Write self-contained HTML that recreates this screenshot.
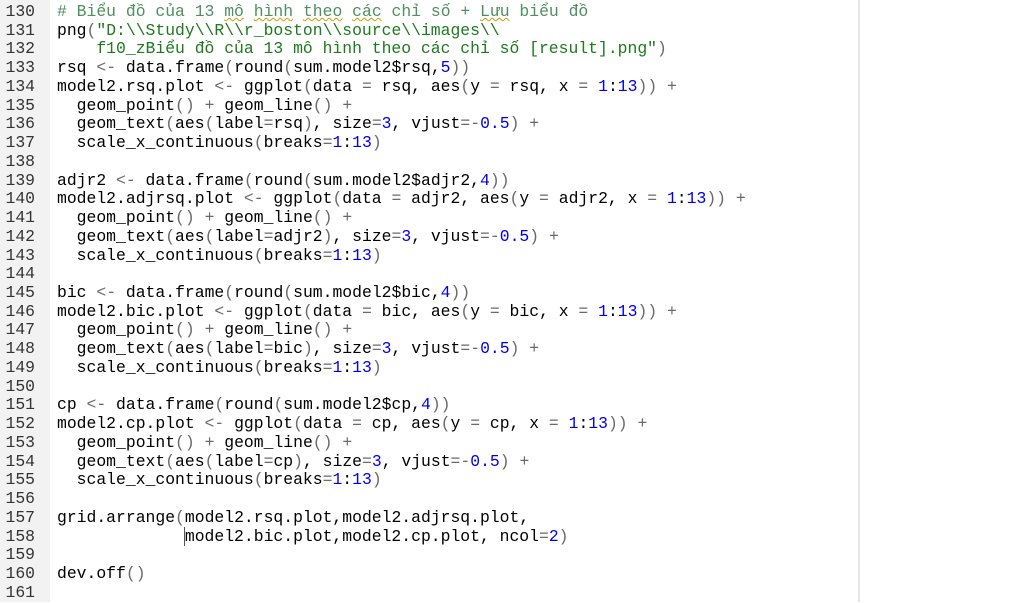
<!DOCTYPE html>
<html><head><meta charset="utf-8">
<style>
html,body{margin:0;padding:0;width:1015px;height:602px;overflow:hidden;background:#fff;}
.gut{position:absolute;left:0;top:0;width:50px;height:602px;background:#f2f2f2;}
.vline{position:absolute;left:858px;top:0;width:2px;height:602px;background:#e6e6e6;}
pre{margin:0;position:absolute;top:3px;font-family:"Liberation Mono","DejaVu Sans Mono",monospace;font-size:16.4px;line-height:18.73px;color:#000;}
.ln{left:0;width:35px;text-align:right;color:#333;}
.code{left:57px;}
.o{color:#6a6a6a}.n{color:#0000ee}.s{color:#1d7a1d}.c{color:#4f8f60}
.u{text-decoration:underline wavy #c8a000;text-decoration-thickness:1px;}
.cur{border-left:1px solid #555;margin-left:-1px}
</style></head><body>
<div class="gut"></div><div class="vline"></div>
<pre class="ln">130
131
132
133
134
135
136
137
138
139
140
141
142
143
144
145
146
147
148
149
150
151
152
153
154
155
156
157
158
159
160
161</pre>
<pre class="code"><span class="c"># Biểu đồ của 13 <span class="u">mô</span> <span class="u">hình</span> <span class="u">theo</span> <span class="u">các</span> chỉ số + <span class="u">Lưu</span> biểu đồ</span>
png<span class="o">(</span><span class="s">"D:\\Study\\R\\r_boston\\source\\images\\
    f10_zBiểu đồ của 13 mô hình theo các chỉ số [result].png"</span><span class="o">)</span>
rsq <span class="o">&lt;-</span> data.frame<span class="o">(</span>round<span class="o">(</span>sum.model2$rsq,<span class="n">5</span><span class="o">))</span>
model2.rsq.plot <span class="o">&lt;-</span> ggplot<span class="o">(</span>data <span class="o">=</span> rsq, aes<span class="o">(</span>y <span class="o">=</span> rsq, x <span class="o">=</span> <span class="n">1</span>:<span class="n">13</span><span class="o">))</span> <span class="o">+</span>
  geom_point<span class="o">()</span> <span class="o">+</span> geom_line<span class="o">()</span> <span class="o">+</span>
  geom_text<span class="o">(</span>aes<span class="o">(</span>label<span class="o">=</span>rsq<span class="o">)</span>, size<span class="o">=</span><span class="n">3</span>, vjust<span class="o">=-</span><span class="n">0.5</span><span class="o">)</span> <span class="o">+</span>
  scale_x_continuous<span class="o">(</span>breaks<span class="o">=</span><span class="n">1</span>:<span class="n">13</span><span class="o">)</span>

adjr2 <span class="o">&lt;-</span> data.frame<span class="o">(</span>round<span class="o">(</span>sum.model2$adjr2,<span class="n">4</span><span class="o">))</span>
model2.adjrsq.plot <span class="o">&lt;-</span> ggplot<span class="o">(</span>data <span class="o">=</span> adjr2, aes<span class="o">(</span>y <span class="o">=</span> adjr2, x <span class="o">=</span> <span class="n">1</span>:<span class="n">13</span><span class="o">))</span> <span class="o">+</span>
  geom_point<span class="o">()</span> <span class="o">+</span> geom_line<span class="o">()</span> <span class="o">+</span>
  geom_text<span class="o">(</span>aes<span class="o">(</span>label<span class="o">=</span>adjr2<span class="o">)</span>, size<span class="o">=</span><span class="n">3</span>, vjust<span class="o">=-</span><span class="n">0.5</span><span class="o">)</span> <span class="o">+</span>
  scale_x_continuous<span class="o">(</span>breaks<span class="o">=</span><span class="n">1</span>:<span class="n">13</span><span class="o">)</span>

bic <span class="o">&lt;-</span> data.frame<span class="o">(</span>round<span class="o">(</span>sum.model2$bic,<span class="n">4</span><span class="o">))</span>
model2.bic.plot <span class="o">&lt;-</span> ggplot<span class="o">(</span>data <span class="o">=</span> bic, aes<span class="o">(</span>y <span class="o">=</span> bic, x <span class="o">=</span> <span class="n">1</span>:<span class="n">13</span><span class="o">))</span> <span class="o">+</span>
  geom_point<span class="o">()</span> <span class="o">+</span> geom_line<span class="o">()</span> <span class="o">+</span>
  geom_text<span class="o">(</span>aes<span class="o">(</span>label<span class="o">=</span>bic<span class="o">)</span>, size<span class="o">=</span><span class="n">3</span>, vjust<span class="o">=-</span><span class="n">0.5</span><span class="o">)</span> <span class="o">+</span>
  scale_x_continuous<span class="o">(</span>breaks<span class="o">=</span><span class="n">1</span>:<span class="n">13</span><span class="o">)</span>

cp <span class="o">&lt;-</span> data.frame<span class="o">(</span>round<span class="o">(</span>sum.model2$cp,<span class="n">4</span><span class="o">))</span>
model2.cp.plot <span class="o">&lt;-</span> ggplot<span class="o">(</span>data <span class="o">=</span> cp, aes<span class="o">(</span>y <span class="o">=</span> cp, x <span class="o">=</span> <span class="n">1</span>:<span class="n">13</span><span class="o">))</span> <span class="o">+</span>
  geom_point<span class="o">()</span> <span class="o">+</span> geom_line<span class="o">()</span> <span class="o">+</span>
  geom_text<span class="o">(</span>aes<span class="o">(</span>label<span class="o">=</span>cp<span class="o">)</span>, size<span class="o">=</span><span class="n">3</span>, vjust<span class="o">=-</span><span class="n">0.5</span><span class="o">)</span> <span class="o">+</span>
  scale_x_continuous<span class="o">(</span>breaks<span class="o">=</span><span class="n">1</span>:<span class="n">13</span><span class="o">)</span>

grid.arrange<span class="o">(</span>model2.rsq.plot,model2.adjrsq.plot,
             <span class="cur"></span>model2.bic.plot,model2.cp.plot, ncol<span class="o">=</span><span class="n">2</span><span class="o">)</span>

dev.off<span class="o">()</span>
</pre>
</body></html>
